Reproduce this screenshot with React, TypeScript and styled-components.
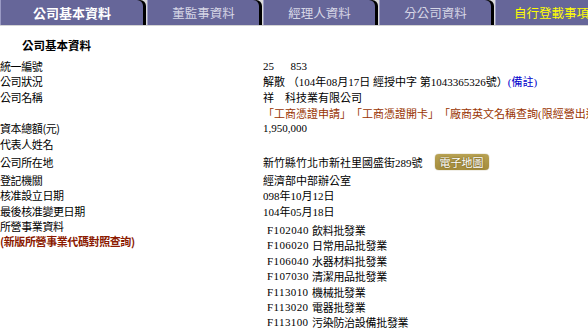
import { FC } from "react";
import styled, { createGlobalStyle } from "styled-components";

const tabs = [
  { title: "公司基本資料", kind: "active" },
  { title: "董監事資料", kind: "normal" },
  { title: "經理人資料", kind: "normal" },
  { title: "分公司資料", kind: "normal" },
  { title: "自行登載事項", kind: "highlight" },
];

const businesses = [
  { code: "F102040", name: "飲料批發業" },
  { code: "F106020", name: "日常用品批發業" },
  { code: "F106040", name: "水器材料批發業" },
  { code: "F107030", name: "清潔用品批發業" },
  { code: "F113010", name: "機械批發業" },
  { code: "F113020", name: "電器批發業" },
  { code: "F113100", name: "污染防治設備批發業" },
];

const App: FC = () => {
  return (
    <>
      <GlobalStyle />
      <Page>
        <TabBar>
          {tabs.map((tab) => (
            <Tab key={tab.title} $kind={tab.kind}>
              {tab.title}
            </Tab>
          ))}
        </TabBar>

        <Heading>公司基本資料</Heading>

        <InfoTable>
          <Label>統一編號</Label>
          <Value>25&nbsp;&nbsp;&nbsp;&nbsp;&nbsp;&nbsp;853</Value>

          <Label>公司狀況</Label>
          <Value>
            解散 （104年08月17日 經授中字 第1043365326號）<NoteLink>(備註)</NoteLink>
          </Value>

          <Label>公司名稱</Label>
          <Value>祥&nbsp;&nbsp;&nbsp;&nbsp;科技業有限公司</Value>

          <Label />
          <Value>
            <BrownLink>「工商憑證申請」</BrownLink>
            <BrownLink>「工商憑證開卡」</BrownLink>
            <BrownLink>「廠商英文名稱查詢(限經營出進口</BrownLink>
          </Value>

          <Label>資本總額(元)</Label>
          <Value>1,950,000</Value>

          <Label>代表人姓名</Label>
          <Value />

          <Label $tall>公司所在地</Label>
          <Value $tall>
            新竹縣竹北市新社里國盛街289號
            <MapButton>電子地圖</MapButton>
          </Value>

          <Label>登記機關</Label>
          <Value>經濟部中部辦公室</Value>

          <Label>核准設立日期</Label>
          <Value>098年10月12日</Value>

          <Label>最後核准變更日期</Label>
          <Value>104年05月18日</Value>

          <BusinessLabel>
            所營事業資料
            <QueryLink>(新版所營事業代碼對照查詢)</QueryLink>
          </BusinessLabel>
          <BusinessList>
            {businesses.map((item) => (
              <BusinessRow key={item.code}>
                <BusinessCode>{item.code}</BusinessCode>
                <BusinessName>{item.name}</BusinessName>
              </BusinessRow>
            ))}
          </BusinessList>
        </InfoTable>
      </Page>
    </>
  );
};

const GlobalStyle = createGlobalStyle`
  html, body {
    margin: 0;
    padding: 0;
    background: #ffffff;
  }
  body {
    font-family: "Liberation Serif", "Noto Sans CJK TC", serif;
    font-size: 11px;
    color: #000000;
    overflow: hidden;
  }
`;

const Page = styled.div`
  width: 588px;
  height: 330px;
  overflow: hidden;
`;

const TabBar = styled.div`
  display: flex;
  gap: 4px;
  height: 25px;
  background: #d9d9d9;
  border-bottom: 1px solid #d4d4d4;
  white-space: nowrap;
`;

const Tab = styled.div<{ $kind: string }>`
  flex: 0 0 auto;
  width: ${(p) => (p.$kind === "active" ? "143px" : "112px")};
  height: 25px;
  box-sizing: border-box;
  background: #666699;
  border-left: 1px solid #9a9ac4;
  border-radius: 0 6px 0 0;
  box-shadow: 3px 0 0 #000000;
  display: flex;
  align-items: center;
  justify-content: center;
  font-family: "Noto Sans CJK TC", sans-serif;
  font-size: ${(p) => (p.$kind === "active" ? "13px" : "12.5px")};
  font-weight: ${(p) => (p.$kind === "active" ? 700 : 400)};
  color: ${(p) =>
    p.$kind === "active" ? "#ffffff" : p.$kind === "highlight" ? "#ffff00" : "#d6d6e6"};
`;

const Heading = styled.div`
  padding: 12px 0 6px 22px;
  font-family: "Noto Sans CJK TC", sans-serif;
  font-size: 11.5px;
  font-weight: 700;
  line-height: 14px;
`;

const InfoTable = styled.div`
  display: grid;
  grid-template-columns: 263px 1fr;
  white-space: nowrap;
`;

const Label = styled.div<{ $tall?: boolean }>`
  height: ${(p) => (p.$tall ? "20.4px" : "15.6px")};
  display: flex;
  align-items: center;
  font-family: "Noto Sans CJK TC", sans-serif;
  letter-spacing: -0.4px;
  overflow: hidden;
`;

const Value = styled.div<{ $tall?: boolean }>`
  height: ${(p) => (p.$tall ? "20.4px" : "15.6px")};
  display: flex;
  align-items: center;
  overflow: hidden;
`;

const NoteLink = styled.span`
  color: #0000cc;
`;

const BrownLink = styled.span`
  color: #993300;
`;

const MapButton = styled.span`
  margin-left: 12px;
  padding: 0 5px;
  height: 16px;
  line-height: 16px;
  border-radius: 4px;
  background: linear-gradient(#b8a253, #a48c3c);
  box-shadow: 0 0 1px #6e5b1c;
  color: #ffffff;
  font-family: "Noto Sans CJK TC", sans-serif;
  font-size: 11px;
  text-shadow: 0 0 2px #5a4810;
`;

const BusinessLabel = styled.div`
  display: flex;
  flex-direction: column;
  font-family: "Noto Sans CJK TC", sans-serif;
  letter-spacing: -0.4px;
  line-height: 15px;
`;

const QueryLink = styled.span`
  color: #8b1a00;
  font-weight: 700;
`;

const BusinessList = styled.div`
  padding: 3.6px 0 0 4px;
  display: flex;
  flex-direction: column;
`;

const BusinessRow = styled.div`
  display: flex;
  align-items: center;
  gap: 8px;
  height: 15.4px;
`;

const BusinessCode = styled.span`
  width: 37px;
  font-family: "Liberation Serif", serif;
  letter-spacing: 0.4px;
`;

const BusinessName = styled.span`
  font-family: "Noto Sans CJK TC", sans-serif;
  letter-spacing: -0.3px;
`;

export default App;
